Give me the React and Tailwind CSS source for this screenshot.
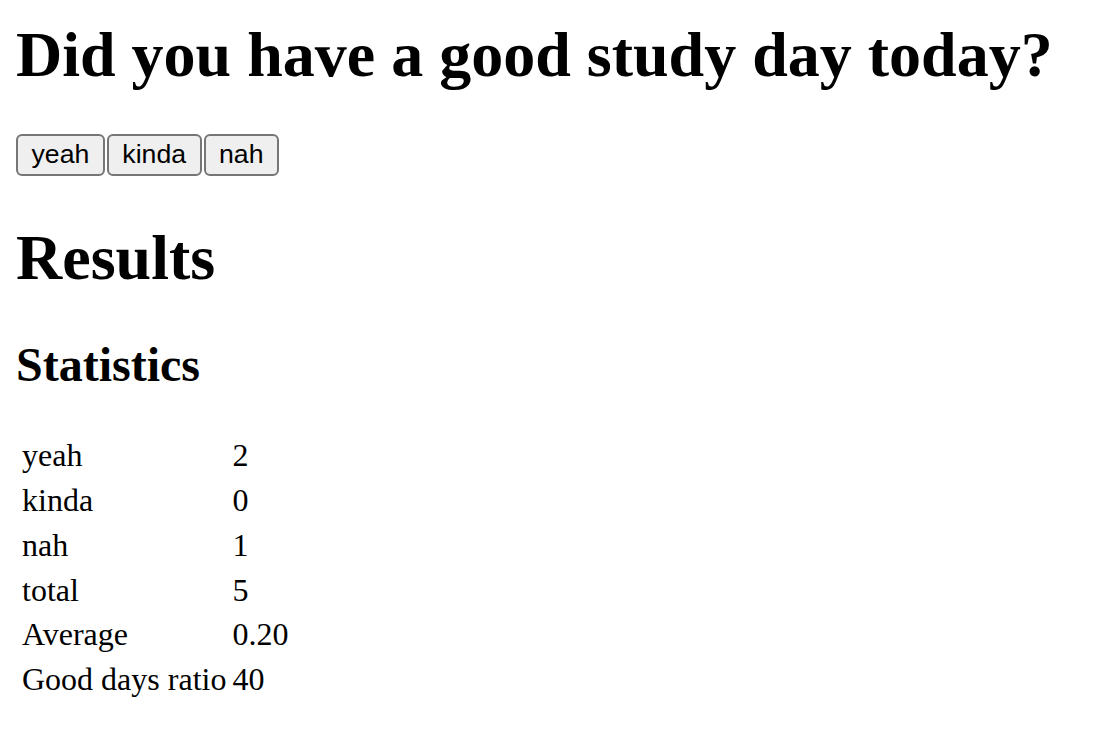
export default function App() {
  const rows = [
    ["yeah", "2"],
    ["kinda", "0"],
    ["nah", "1"],
    ["total", "5"],
    ["Average", "0.20"],
    ["Good days ratio", "40"],
  ];
  const btn =
    "h-[42px] px-[13.5px] border-2 border-[#767676] rounded-[6px] bg-[#efefef] text-black text-[26.67px] leading-none font-['Liberation_Sans',Arial,sans-serif]";
  return (
    <div className="min-h-screen bg-white text-black px-[16px] pt-[18px] font-['Liberation_Serif','Times_New_Roman',serif]">
      <h1 className="text-[64px] font-bold leading-[1.149] m-0">
        Did you have a good study day today?
      </h1>
      <div className="flex gap-[2px] mt-[42px]">
        <button className={btn}>yeah</button>
        <button className={btn}>kinda</button>
        <button className={btn}>nah</button>
      </div>
      <h1 className="text-[64px] font-bold leading-[1.149] mt-[45px]">Results</h1>
      <h2 className="text-[48px] font-bold leading-[1.149] mt-[42.5px]">Statistics</h2>
      <table className="mt-[39.5px] border-separate border-spacing-[4px] text-[32px] leading-[1.149]">
        <tbody>
          {rows.map(([k, v]) => (
            <tr key={k}>
              <td className="p-[2px] pr-0">{k}</td>
              <td className="p-[2px]">{v}</td>
            </tr>
          ))}
        </tbody>
      </table>
    </div>
  );
}
